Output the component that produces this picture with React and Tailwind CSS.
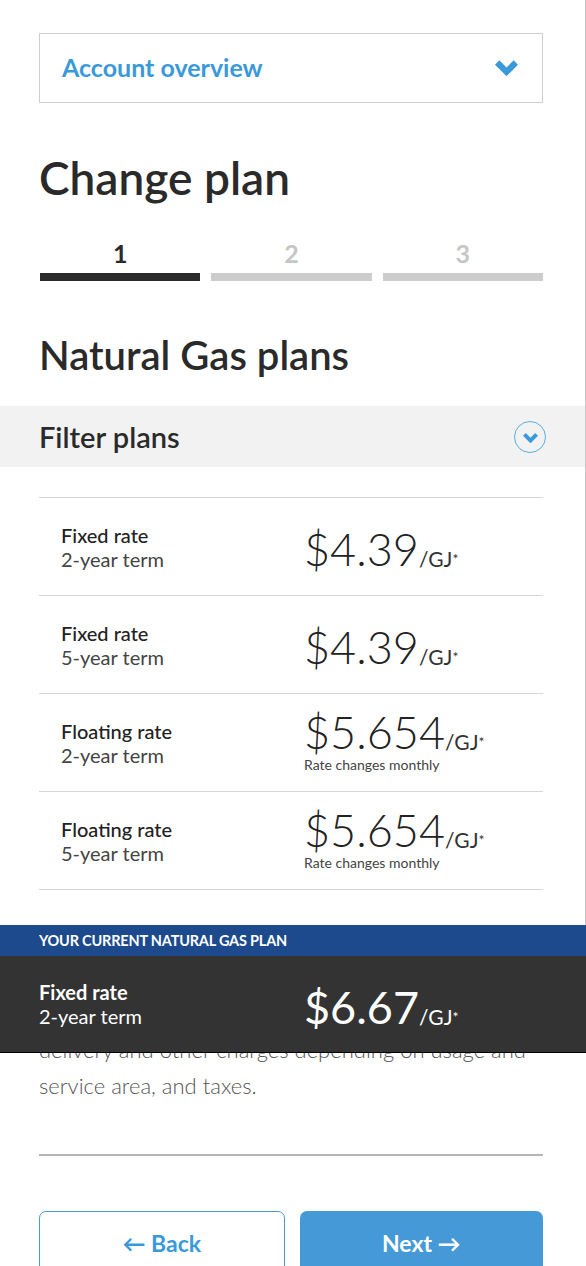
const plans = [
  { name: "Fixed rate", term: "2-year term", price: "$4.39" },
  { name: "Fixed rate", term: "5-year term", price: "$4.39" },
  { name: "Floating rate", term: "2-year term", price: "$5.654", note: "Rate changes monthly" },
  { name: "Floating rate", term: "5-year term", price: "$5.654", note: "Rate changes monthly" },
];

const Chevron = ({ className }) => (
  <svg viewBox="0 0 24 16" className={className} fill="currentColor">
    <polygon points="0,4.5 4.5,0 12,7.5 19.5,0 24,4.5 12,16.5" />
  </svg>
);

const PlanRow = ({ plan }) => (
  <div className="flex items-center h-[98px] border-b border-[#d6d6d6] pl-[22px]">
    <div className="w-[243px]">
      <div className="text-[20px] leading-[24px] font-medium text-[#222]">{plan.name}</div>
      <div className="text-[20px] leading-[24px] text-[#444]">{plan.term}</div>
    </div>
    <div className={`flex flex-col ${plan.note ? "mt-[-4px]" : "mt-[4px]"}`}>
      <div className="flex items-end text-[#222]">
        <span className="text-[45px] leading-[48px] font-light">{plan.price}</span>
        <span className="text-[21px] leading-[24px] mb-[2px] text-[#333]">/GJ<span className="text-[14px] align-top">*</span></span>
      </div>
      {plan.note && <div className="text-[14px] leading-[18px] text-[#444]">{plan.note}</div>}
    </div>
  </div>
);

export default function App() {
  return (
    <div className="relative h-[1266px] overflow-hidden bg-white font-['Lato','Open_Sans',sans-serif]">
      <div className="border-r border-[#c8c8c8] h-[925px] absolute right-0 top-0 w-0" />
      <div className="pt-[33px]">
        {/* account dropdown */}
        <div className="ml-[39px] mr-[43px] h-[70px] border border-[#cfcfcf] flex items-center justify-between pl-[22px] pr-[24px]">
          <span className="text-[25px] font-bold text-[#3a9ad9]">Account overview</span>
          <Chevron className="text-[#3a9ad9] w-[23px] h-[16px]" />
        </div>

        <h1 className="ml-[39px] mt-[47px] text-[46px] leading-[56px] font-semibold text-[#2a2a2a]">Change plan</h1>

        {/* steps */}
        <div className="ml-[40px] mr-[43px] mt-[32px] flex gap-[11px]">
          {["1", "2", "3"].map((n, i) => (
            <div key={n} className="flex-1 flex flex-col items-center">
              <span className={`text-[25px] leading-[30px] font-bold ${i === 0 ? "text-[#2a2a2a]" : "text-[#c6c6c6]"}`}>{n}</span>
              <div className={`mt-[5px] h-[8px] w-full ${i === 0 ? "bg-[#2b2b2b]" : "bg-[#cccccc]"}`} />
            </div>
          ))}
        </div>

        <h2 className="ml-[39px] mt-[50px] text-[40px] leading-[48px] font-semibold text-[#2a2a2a]">Natural Gas plans</h2>

        {/* filter */}
        <div className="mt-[27px] h-[61px] bg-[#f2f2f2] flex items-center justify-between pl-[39px] pr-[40px]">
          <span className="text-[29px] font-semibold text-[#2a2a2a]">Filter plans</span>
          <span className="w-[32px] h-[32px] rounded-full border-[1.5px] border-[#5aaee3] flex items-center justify-center">
            <Chevron className="text-[#3a9ad9] w-[15px] h-[10px] mt-[2px]" />
          </span>
        </div>

        {/* plans */}
        <div className="ml-[39px] mr-[43px] mt-[30px] border-t border-[#d6d6d6]">
          {plans.map((p, i) => (
            <PlanRow key={i} plan={p} />
          ))}
        </div>

        <p className="ml-[39px] mt-[34px] text-[22px] leading-[36px] font-light text-[#555] whitespace-nowrap">
          *Rates shown are for the natural gas<br />
          commodity only and do not include the<br />
          basic monthly charge, administration,<br />
          delivery and other charges depending on usage and<br />
          service area, and taxes.
        </p>

        <div className="ml-[39px] mr-[43px] mt-[50px] h-[2px] bg-[#b5b5b5]" />

        <div className="ml-[39px] mr-[43px] mt-[55px] flex gap-[15px]">
          <button className="flex-1 h-[64px] rounded-[7px] border border-[#4a9bd5] text-[#3a9ad9] text-[23px] font-bold">← Back</button>
          <button className="flex-1 h-[64px] rounded-[7px] bg-[#4499d6] text-white text-[23px] font-bold">Next →</button>
        </div>
      </div>

      {/* current plan overlay */}
      <div className="absolute inset-x-0 top-[925px]">
        <div className="h-[31px] bg-[#1c4a8c] flex items-center pl-[39px]">
          <span className="text-[14.5px] font-bold text-white tracking-[-0.2px]">YOUR CURRENT NATURAL GAS PLAN</span>
        </div>
        <div className="h-[97px] bg-[#333333] border-b border-black flex items-center pl-[39px]">
          <div className="w-[265px]">
            <div className="text-[20px] leading-[24px] font-bold text-white">Fixed rate</div>
            <div className="text-[20px] leading-[24px] text-white">2-year term</div>
          </div>
          <div className="flex items-end text-white mt-[6px]">
            <span className="text-[45px] leading-[48px] font-normal">$6.67</span>
            <span className="text-[21px] leading-[24px] mb-[2px]">/GJ<span className="text-[14px] align-top">*</span></span>
          </div>
        </div>
      </div>
    </div>
  );
}
